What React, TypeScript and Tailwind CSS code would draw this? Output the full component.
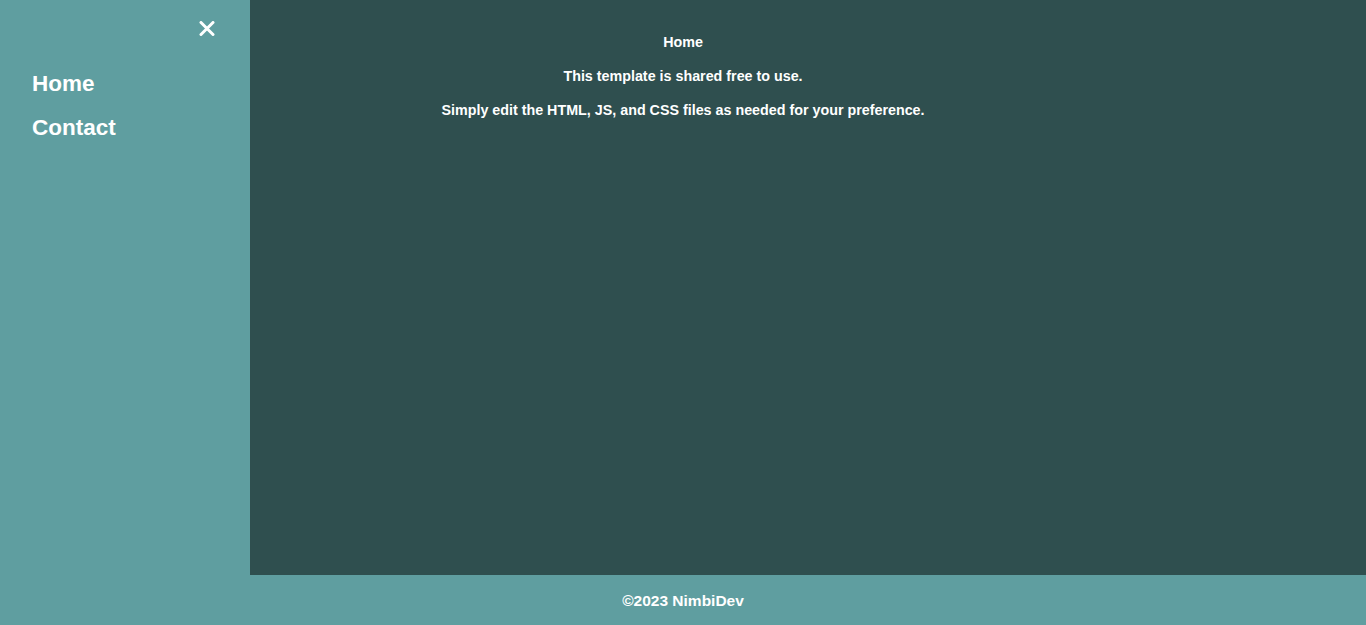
const font = "font-['Liberation_Sans',Arial,sans-serif]";

function SideNav() {
  return (
    <aside className={`absolute top-0 left-0 w-[250px] h-[575px] bg-[#5f9ea0] ${font}`}>
      <div className="flex justify-end pr-[35px] pt-[21px]">
        <svg width="16" height="15" viewBox="0 0 16 15" fill="none">
          <path d="M2 1.5 L14 13.5 M14 1.5 L2 13.5" stroke="#ffffff" strokeWidth="3" strokeLinecap="round" />
        </svg>
      </div>
      <nav className="flex flex-col pl-[32px] pt-[33px] gap-[14px]">
        <a className="text-[22.5px] leading-[30px] font-bold text-white">Home</a>
        <a className="text-[22.5px] leading-[30px] font-bold text-white">Contact</a>
      </nav>
    </aside>
  );
}

export default function App() {
  return (
    <div className={`relative h-screen flex flex-col ${font}`}>
      <main className="flex-1 bg-[#2f4f4f] flex flex-col items-center pt-[33px] gap-[16px] text-[14.3px] leading-[18px] font-bold text-white">
        <p>Home</p>
        <p>This template is shared free to use.</p>
        <p>Simply edit the HTML, JS, and CSS files as needed for your preference.</p>
      </main>
      <footer className="h-[50px] shrink-0 bg-[#5f9ea0] flex items-center justify-center pt-[2px] text-[15.5px] font-bold text-white">
        ©2023 NimbiDev
      </footer>
      <SideNav />
    </div>
  );
}
